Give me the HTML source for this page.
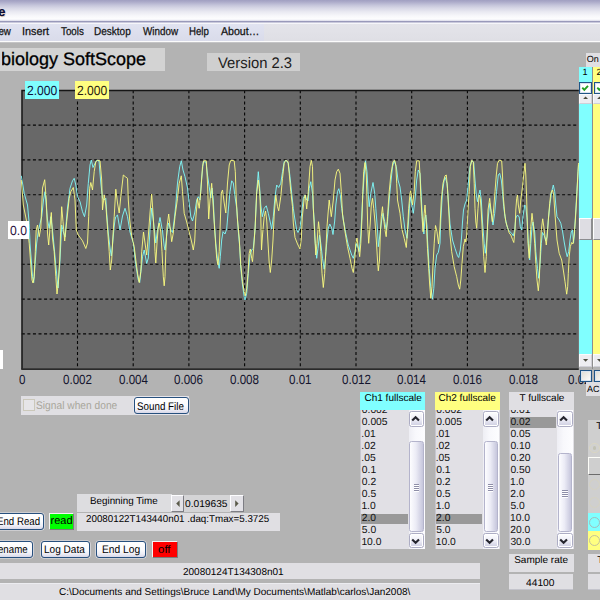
<!DOCTYPE html>
<html><head><meta charset="utf-8"><title>Neurobiology SoftScope</title>
<style>
html,body{margin:0;padding:0}
body{width:600px;height:600px;overflow:hidden;position:relative;background:#b3b3b3;font-family:"Liberation Sans",sans-serif;font-size:10px;color:#000;text-rendering:geometricPrecision}
div{position:absolute;box-sizing:border-box;white-space:nowrap}
.t{position:absolute;white-space:nowrap;transform-origin:0 0;display:block}
#tb{left:0;top:0;width:600px;height:23px;background:linear-gradient(#a09fc1 0,#adacca 9%,#c4c4da 22%,#d7d7e6 35%,#eaeaf2 52%,#f8f8fb 70%,#fdfdfe 83%,#e6e6f0 89%,#a0a0c0 92.5%,#8e8eb2 95%,#c4c4d8 97.5%,#f0f0f6 100%);overflow:hidden}
#mb{left:0;top:23px;width:600px;height:20px;background:linear-gradient(#f6f6fa 0,#f6f6fa 1px,#e4e4ea 1px,#dfdfe5 17.5px,#fbfbfb 18px,#fbfbfb 19px,#c4c4c6 19px);overflow:hidden}
#mb .t{-webkit-text-stroke:.25px #111}
#mb i{position:absolute;left:0;top:1px;width:264px;height:17px;background:linear-gradient(#e1e3f1,#d9dbea)}
.box{background:#e0dfe3}
.btn{border:1px solid #27507e;border-radius:3px;background:linear-gradient(#fff 0,#fbfbfd 50%,#eeeef6 78%,#d7d7e8 100%);box-shadow:0 0 0 .6px rgba(236,236,244,.9);overflow:hidden}
.ind{border-style:solid;border-width:1.5px 1px 1px 1.5px;border-color:#f4f4f4 #7c7c7c #7c7c7c #f4f4f4;overflow:hidden}
.lb{background:#e1e0e5;overflow:hidden;border-left:1px solid #c6c6cf}
.sel{background:#999}
.sb{top:0;width:16px;height:139px;background:linear-gradient(90deg,#eeeef4,#f8f8fc 40%,#fdfdff)}
.sbt{left:.2px;width:15.6px;height:15.6px;background:linear-gradient(#fefeff,#ececf6 55%,#cdcde0);border:1px solid #adadc4;border-radius:2.5px;box-shadow:inset 0 0 0 1px #fff}
.sbt svg{position:absolute;left:-.6px;top:.4px}
.thumb{left:.8px;width:14.4px;background:linear-gradient(90deg,#fdfdff,#ececf6 45%,#c6c6dc);border:1px solid #b4b4cc;border-radius:2.5px}
.thumb i{position:absolute;left:3.4px;top:50%;margin-top:-2.6px;width:5.5px;height:8px;background:repeating-linear-gradient(#8e8ea8 0,#8e8ea8 1px,#fff 1px,#fff 2px)}
.vs{top:67px;width:13.2px;height:287px}
.cb{width:12.2px;height:12px;border:1px solid #1f5486;background:#fff;box-shadow:inset 0 0 0 1px #d8e2ee}
.cb svg{position:absolute;left:-1px;top:-1px}
.ab{left:0;width:13.2px;background:#ededf1;border:1px solid;border-color:#fafafc #d0d0d8 #d0d0d8 #fafafc}
.ab svg{position:absolute;left:-1px;top:-1px}
.vt{left:0;width:13.2px;height:21.6px;background:#dedde3;border-style:solid;border-width:1.4px 1.1px 1.1px 1.4px;border-color:#fff #8c8c90 #8c8c90 #fff}
.rd{width:11px;height:11px;border-radius:50%;border:1px solid}
</style></head><body>
<div id="tb"><span class="t" style="left:-58.7px;top:5px;font-size:13px;line-height:13px;font-weight:bold;color:#0c0c34;text-shadow:.6px .6px 0 #c8863a55,-.5px 0 0 #2a4ab055;">SoftScope</span></div>
<div id="mb"><i></i>
<span class="t" style="left:-10.4px;top:4px;font-size:11.3px;line-height:11.3px;color:#111;transform:scaleX(0.860);">View</span>
<span class="t" style="left:21.9px;top:4px;font-size:11.3px;line-height:11.3px;color:#111;transform:scaleX(0.960);">Insert</span>
<span class="t" style="left:60.9px;top:4px;font-size:11.3px;line-height:11.3px;color:#111;transform:scaleX(0.869);">Tools</span>
<span class="t" style="left:94.4px;top:4px;font-size:11.3px;line-height:11.3px;color:#111;transform:scaleX(0.886);">Desktop</span>
<span class="t" style="left:142.8px;top:4px;font-size:11.3px;line-height:11.3px;color:#111;transform:scaleX(0.871);">Window</span>
<span class="t" style="left:189.4px;top:4px;font-size:11.3px;line-height:11.3px;color:#111;transform:scaleX(0.855);">Help</span>
<span class="t" style="left:221.0px;top:4px;font-size:11.3px;line-height:11.3px;color:#111;transform:scaleX(0.938);">About…</span>
</div>

<div style="left:0;top:47.8px;width:165px;height:23.4px;background:#d3d3d3"><div style="left:1.7px;top:0;width:163px;height:23.4px;overflow:hidden"><span class="t" style="left:-49.8px;top:2px;font-size:18px;line-height:18px;color:#000;-webkit-text-stroke:.3px #000;">Neurobiology SoftScope</span></div></div>
<div style="left:207px;top:52.8px;width:93px;height:18.2px;background:#cfcfcf"><span class="t" style="left:10.7px;top:3px;font-size:15.3px;line-height:15.3px;color:#1c1c1c;transform:scaleX(0.968);">Version 2.3</span></div>

<svg style="position:absolute;left:0;top:0" width="600" height="600" viewBox="0 0 600 600">
<rect x="21.8" y="90.3" width="557.0" height="278.4" fill="#686868"/>
<g stroke="#050505" stroke-width="1.1" stroke-dasharray="3 2.57" fill="none">
<line x1="77.5" y1="90.3" x2="77.5" y2="368.7"/>
<line x1="133.2" y1="90.3" x2="133.2" y2="368.7"/>
<line x1="188.9" y1="90.3" x2="188.9" y2="368.7"/>
<line x1="244.6" y1="90.3" x2="244.6" y2="368.7"/>
<line x1="300.3" y1="90.3" x2="300.3" y2="368.7"/>
<line x1="356.0" y1="90.3" x2="356.0" y2="368.7"/>
<line x1="411.7" y1="90.3" x2="411.7" y2="368.7"/>
<line x1="467.4" y1="90.3" x2="467.4" y2="368.7"/>
<line x1="523.1" y1="90.3" x2="523.1" y2="368.7"/>
<line x1="21.8" y1="125.1" x2="578.8" y2="125.1"/>
<line x1="21.8" y1="159.9" x2="578.8" y2="159.9"/>
<line x1="21.8" y1="194.7" x2="578.8" y2="194.7"/>
<line x1="21.8" y1="229.5" x2="578.8" y2="229.5"/>
<line x1="21.8" y1="264.3" x2="578.8" y2="264.3"/>
<line x1="21.8" y1="299.1" x2="578.8" y2="299.1"/>
<line x1="21.8" y1="333.9" x2="578.8" y2="333.9"/>
</g>
<path d="M22.0 369.3 V90.5 H578.8" fill="none" stroke="#161616" stroke-width="1.5"/>
<path d="M21.3 369.2 H578.8" fill="none" stroke="#2a2a2a" stroke-width="1.7"/>
<g fill="none" stroke-width="1" stroke-linejoin="round" stroke-opacity=".9">
<polyline stroke="#7ffcfc" points="21.3,175.8 24.2,193.3 27.5,205.0 29.2,223.3 30.0,243.0 32.5,276.7 33.7,282.5 35.0,265.0 36.7,243.0 38.3,231.0 41.7,216.7 43.5,200.0 45.0,191.7 46.2,205.0 47.5,220.0 49.2,228.3 50.8,216.7 52.0,226.0 53.3,238.0 55.8,265.0 58.0,288.0 60.0,260.0 61.7,225.0 63.3,232.0 65.0,237.0 67.5,208.0 70.0,188.3 72.5,180.8 74.2,178.3 75.8,185.0 77.5,196.7 80.0,201.7 82.5,211.7 84.5,216.7 86.7,205.0 88.3,183.3 90.0,165.0 91.3,160.0 93.0,167.5 95.0,163.3 96.7,160.3 99.0,161.0 100.8,183.0 102.5,198.0 104.2,200.0 105.8,198.3 106.7,213.0 108.3,233.0 110.0,248.0 111.3,256.0 112.5,245.0 114.0,228.0 115.0,220.0 115.8,216.7 117.5,215.0 120.0,230.0 122.5,216.0 125.0,208.3 127.5,216.7 130.0,232.0 133.3,243.0 135.8,265.0 138.3,280.0 139.7,282.5 141.3,268.0 142.5,256.7 144.2,250.0 146.7,263.5 148.3,258.0 150.0,230.0 151.7,208.0 153.5,222.0 155.8,243.0 157.5,230.0 160.0,217.5 162.5,231.0 164.2,246.0 165.0,250.0 166.7,235.0 168.5,223.0 170.8,230.0 172.5,232.5 174.2,220.0 175.8,205.0 177.5,183.0 179.7,166.7 181.3,160.8 183.0,170.0 185.0,176.7 187.5,188.0 189.2,203.0 190.8,216.7 192.5,221.0 194.7,213.0 196.7,200.0 198.3,196.7 200.0,200.0 201.7,178.0 203.3,161.7 206.0,162.0 207.5,175.0 209.2,186.7 210.8,198.0 212.0,188.0 213.3,200.0 214.2,220.0 215.8,243.3 217.5,260.0 219.2,268.3 220.3,256.7 221.7,240.0 223.0,231.7 225.0,234.0 226.7,229.0 228.3,210.0 230.0,191.7 231.7,180.8 233.3,183.0 235.0,196.7 236.7,208.0 238.3,231.0 239.7,246.7 240.8,268.3 242.5,285.0 244.2,296.7 245.0,300.0 246.7,293.3 248.3,273.3 250.0,255.0 251.7,250.0 253.3,248.3 255.0,230.0 256.7,191.7 258.3,171.7 259.7,188.3 260.8,205.0 262.3,216.7 264.2,208.3 266.3,205.8 268.3,213.3 270.0,221.0 271.7,229.0 273.3,216.7 275.0,196.7 276.7,185.0 278.7,187.5 280.8,183.3 282.5,171.7 284.2,161.7 285.8,160.0 288.3,163.3 290.0,176.7 291.7,193.3 293.3,208.3 295.0,220.0 296.7,230.0 298.0,232.5 300.0,228.3 301.7,213.3 303.3,198.3 305.0,195.0 306.7,200.0 308.0,201.0 309.2,188.3 310.8,181.7 312.5,193.3 313.3,208.3 314.2,220.0 315.3,243.3 316.7,258.3 318.0,248.3 319.5,235.0 320.8,243.3 322.5,258.3 324.2,269.2 325.3,260.0 326.7,243.3 328.3,228.0 329.8,224.0 331.7,228.0 333.0,234.5 334.7,221.0 335.8,205.0 337.5,191.7 338.8,188.7 340.3,195.0 341.7,208.3 343.3,220.0 345.8,233.3 348.3,245.0 351.7,255.0 353.3,258.3 355.0,251.7 356.7,243.5 358.3,248.3 359.2,251.7 360.8,235.0 362.5,200.0 364.2,175.0 365.5,160.8 367.0,171.7 368.0,191.7 369.2,206.7 370.8,193.3 373.0,182.5 374.7,193.3 375.8,208.3 377.5,230.0 378.3,246.7 379.5,238.0 381.7,220.0 383.0,213.3 384.7,221.7 386.2,230.0 387.5,221.7 389.2,200.0 390.8,183.3 392.5,166.7 394.2,160.8 396.3,166.7 398.0,180.0 400.0,187.0 401.7,200.0 403.3,216.7 405.0,230.0 407.0,238.3 408.3,225.0 409.7,203.3 410.8,196.7 412.0,206.7 413.3,213.3 415.0,200.0 416.7,180.0 418.3,170.0 420.0,173.3 421.3,196.7 422.5,220.0 423.9,234.0 425.0,218.0 425.8,215.0 427.0,226.0 427.5,240.0 429.2,268.3 430.8,288.3 432.5,299.2 433.8,288.3 435.0,268.3 436.7,255.0 438.3,252.5 440.0,243.3 440.8,220.0 442.5,191.7 444.2,180.0 445.3,177.5 447.0,183.3 448.3,200.0 450.0,224.0 452.5,240.0 455.0,248.3 457.5,255.8 458.7,257.5 460.3,250.0 461.5,238.0 462.5,222.0 463.5,210.0 465.0,204.0 466.7,200.0 468.3,183.3 470.0,166.7 471.7,160.8 473.7,162.5 475.0,180.0 476.3,195.0 477.5,201.7 478.7,195.0 480.0,190.0 481.3,200.0 482.5,222.0 484.2,243.3 485.3,253.3 486.7,240.0 488.0,220.0 489.7,203.3 491.3,213.3 493.0,225.0 494.7,213.3 496.5,191.7 498.3,175.0 499.7,173.3 501.3,180.0 502.5,191.7 503.7,206.7 505.0,216.7 506.7,225.0 508.3,230.0 510.0,231.7 511.7,233.3 513.3,235.8 514.7,230.0 515.8,218.0 517.5,215.0 519.2,217.0 520.3,226.7 521.7,230.0 523.0,216.7 524.7,205.0 525.8,206.7 527.0,218.0 527.5,226.7 528.7,248.3 529.7,260.0 530.8,243.3 532.0,226.7 533.0,222.0 534.7,232.0 535.8,251.7 537.5,268.3 538.7,278.3 540.0,265.0 541.3,243.3 542.5,232.5 544.2,235.5 545.8,241.0 547.0,237.0 548.3,220.0 550.0,203.3 551.7,191.7 553.3,185.0 554.7,191.7 555.8,205.0 557.0,216.7 559.2,220.0 560.8,223.3 562.5,231.0 564.2,242.0 565.8,251.0 567.2,256.7 568.7,251.7 570.0,240.0 571.3,232.0 572.5,230.0 573.5,243.0 574.5,232.0 575.5,215.0 576.7,195.0 578.0,172.0 578.5,165.0"/>
<polyline stroke="#fcfc80" points="21.3,180.0 23.3,205.0 26.7,221.7 29.2,243.3 30.8,265.0 32.0,280.0 33.0,283.0 34.2,276.7 35.3,251.7 36.2,230.0 37.5,225.0 39.2,236.7 40.8,228.0 42.5,188.0 44.7,179.7 46.3,200.0 47.5,233.0 48.7,245.0 50.0,228.0 51.3,212.5 52.5,238.0 54.2,251.7 55.8,276.7 57.0,294.0 58.3,283.0 59.7,260.0 60.5,235.0 61.7,206.7 63.0,221.7 64.7,241.0 66.7,221.7 69.2,198.3 70.8,191.7 73.3,187.5 75.0,200.0 76.3,230.0 78.3,235.0 82.5,240.8 85.8,248.5 87.5,243.0 88.7,216.7 89.7,188.3 90.8,182.5 92.5,190.0 94.2,171.7 95.8,161.7 97.5,160.3 100.0,160.8 101.7,180.0 102.5,210.0 104.2,195.0 105.8,205.0 107.5,228.0 109.2,251.7 110.3,270.0 111.7,260.0 113.0,235.0 114.2,216.7 115.8,189.2 117.5,203.0 119.2,213.0 120.8,196.7 123.3,175.0 125.3,176.7 127.5,178.3 128.3,200.0 129.7,220.0 131.7,236.0 134.2,246.7 135.8,260.0 137.5,273.0 139.2,282.5 140.8,271.7 141.7,251.7 143.5,232.0 145.0,243.0 146.7,255.0 148.3,236.0 150.0,213.0 151.7,194.0 153.0,213.0 154.2,234.0 155.0,251.7 155.8,263.0 157.0,243.0 158.3,227.0 159.2,223.0 160.8,232.0 162.0,251.7 163.3,276.7 164.2,285.8 165.0,276.7 165.8,251.7 167.0,226.7 168.7,214.0 170.0,226.7 171.7,241.7 173.3,233.0 175.0,216.7 177.5,198.3 179.2,183.3 181.3,175.8 182.5,191.7 184.2,213.3 186.7,222.0 189.2,232.0 191.7,242.0 193.3,250.0 194.7,241.0 195.8,218.0 197.5,198.3 199.2,208.3 200.8,191.7 202.5,166.7 203.7,160.8 206.3,160.8 207.5,183.0 208.7,219.0 210.0,200.0 211.7,183.3 213.3,208.0 215.0,235.0 216.7,258.3 218.0,265.0 219.2,251.7 220.3,222.0 221.3,193.0 222.5,190.0 224.2,203.0 225.8,213.0 227.5,183.0 229.2,165.0 230.8,160.3 234.2,160.8 235.3,171.7 236.3,200.0 237.5,220.0 239.2,238.0 240.8,265.0 242.5,281.7 244.2,291.7 245.3,295.8 246.7,288.3 248.0,273.3 249.2,253.3 250.3,249.0 251.7,258.3 252.5,261.7 253.7,248.3 255.2,226.0 256.7,193.0 258.3,180.0 259.7,191.7 260.8,218.0 261.5,250.0 262.5,235.0 264.2,216.7 265.5,211.0 266.7,220.0 268.0,243.0 269.2,263.0 270.3,272.5 271.7,260.0 273.0,240.0 274.2,215.0 275.8,195.0 277.5,206.7 278.7,210.8 280.8,196.7 282.5,178.3 284.2,163.3 285.8,160.3 288.0,161.7 289.2,173.3 290.8,191.7 292.5,206.7 293.3,223.0 295.0,237.5 297.5,244.0 300.0,249.0 301.3,239.0 302.3,217.0 304.2,198.3 305.3,195.0 306.7,209.0 308.3,191.7 310.0,166.7 311.3,160.3 312.5,166.7 313.3,208.0 314.7,235.0 315.8,255.0 317.0,243.3 318.5,221.7 319.7,232.0 320.8,251.7 322.0,273.3 323.3,287.5 324.7,273.3 325.8,251.7 327.0,226.7 328.0,214.0 329.2,200.0 330.0,206.7 331.3,216.7 333.3,200.0 335.0,180.0 336.7,171.7 338.3,169.2 340.0,173.3 341.3,191.7 342.5,214.0 345.0,231.7 347.5,246.7 350.0,258.3 352.0,268.3 353.3,272.5 354.7,260.0 355.8,243.3 357.0,238.0 358.3,248.0 359.7,256.7 360.8,243.3 362.0,218.0 362.8,191.7 363.7,171.7 365.0,162.5 366.3,175.0 367.0,200.0 367.7,225.0 368.7,243.3 370.2,224.0 371.3,205.0 372.5,198.3 373.7,208.3 375.0,222.0 376.3,240.0 377.5,260.0 378.3,270.8 379.5,260.0 380.3,235.0 381.3,216.7 382.5,206.7 383.3,216.7 385.0,230.0 386.2,236.7 387.5,216.7 389.2,191.7 390.8,175.0 393.0,161.7 394.7,160.3 395.8,165.0 396.7,183.3 397.5,200.0 400.0,213.3 401.7,228.3 404.2,238.3 406.3,247.5 407.5,230.0 408.7,208.3 410.0,193.3 410.8,190.8 412.5,205.0 414.2,191.7 415.3,171.7 416.7,160.8 419.2,160.8 420.0,175.0 420.8,196.7 422.0,216.7 423.0,231.7 424.2,213.3 425.0,205.0 426.3,223.0 427.5,248.3 428.7,268.3 429.7,285.0 430.8,298.3 432.0,286.7 433.0,265.0 434.2,243.3 435.5,225.5 437.0,231.7 438.5,244.0 440.0,227.0 441.3,200.0 443.0,183.3 445.0,175.8 446.3,175.0 447.5,188.3 448.7,210.0 450.0,235.0 451.7,251.7 454.2,266.7 456.7,276.7 458.3,285.0 459.7,289.2 460.8,280.0 462.0,263.3 463.3,246.7 465.0,239.0 465.8,242.0 466.7,235.0 467.5,220.0 468.3,205.0 469.2,191.7 470.3,166.7 471.7,160.3 473.3,161.7 474.2,183.3 475.0,208.3 475.8,222.0 476.7,228.3 478.0,208.3 479.2,195.0 480.3,198.3 481.3,212.0 482.5,235.0 483.7,256.7 485.0,272.5 486.3,256.7 487.2,235.0 488.0,210.0 489.7,198.3 490.8,208.3 492.3,221.7 493.3,213.3 495.0,191.7 496.3,175.0 497.5,163.3 499.2,160.3 501.7,160.8 502.5,175.0 503.3,196.7 504.7,213.3 505.8,221.7 507.5,227.5 509.2,233.0 510.8,235.0 512.5,239.5 513.8,242.5 515.0,230.0 515.8,210.0 516.7,198.3 517.5,195.0 518.3,205.0 519.7,213.3 520.8,200.0 522.5,186.7 523.7,175.0 525.0,163.3 525.8,175.0 526.7,200.0 527.3,222.0 528.0,243.3 529.2,258.3 530.0,243.3 530.8,226.7 532.0,213.3 533.3,225.0 534.7,243.3 535.8,263.3 537.0,280.0 538.3,290.8 539.3,280.0 540.3,251.7 541.3,230.0 542.7,218.8 543.7,226.0 545.0,236.7 546.3,245.0 547.5,232.0 548.5,218.0 549.7,203.3 550.8,193.3 552.5,190.0 553.7,195.0 554.7,210.0 555.8,225.0 557.0,240.0 559.2,253.3 561.7,260.0 563.3,270.0 565.0,281.7 566.7,294.2 567.7,286.7 568.3,273.3 569.2,256.7 570.3,246.7 571.7,242.5 573.0,244.0 574.2,235.0 575.3,221.0 576.3,205.0 577.0,191.7 578.0,171.7 578.5,163.0"/>
</g>
</svg>

<div style="left:25px;top:80.8px;width:33.8px;height:18.4px;background:#80ffff"><span class="t" style="left:1.5px;top:3px;font-size:13.33px;line-height:13.33px;color:#10103a;transform:scaleX(0.907);">2.000</span></div>
<div style="left:75.4px;top:80.8px;width:33.8px;height:18.4px;background:#ffff80"><span class="t" style="left:1.5px;top:3px;font-size:13.33px;line-height:13.33px;color:#2a1a10;transform:scaleX(0.907);">2.000</span></div>
<div style="left:8px;top:221px;width:21.4px;height:18.3px;background:#fff"><span class="t" style="left:2.0px;top:3px;font-size:13.33px;line-height:13.33px;color:#2a1040;transform:scaleX(0.913);">0.0</span></div>
<div style="left:0;top:350px;width:3px;height:18.5px;background:#fff"></div>
<span class="t" style="left:18.6px;top:373px;font-size:13.33px;line-height:13.33px;color:#14142e;transform:scaleX(0.870);">0</span><span class="t" style="left:63.1px;top:373px;font-size:13.33px;line-height:13.33px;color:#14142e;transform:scaleX(0.870);">0.002</span><span class="t" style="left:118.6px;top:373px;font-size:13.33px;line-height:13.33px;color:#14142e;transform:scaleX(0.870);">0.004</span><span class="t" style="left:174.4px;top:373px;font-size:13.33px;line-height:13.33px;color:#14142e;transform:scaleX(0.870);">0.006</span><span class="t" style="left:230.1px;top:373px;font-size:13.33px;line-height:13.33px;color:#14142e;transform:scaleX(0.870);">0.008</span><span class="t" style="left:289.1px;top:373px;font-size:13.33px;line-height:13.33px;color:#14142e;transform:scaleX(0.870);">0.01</span><span class="t" style="left:341.6px;top:373px;font-size:13.33px;line-height:13.33px;color:#14142e;transform:scaleX(0.870);">0.012</span><span class="t" style="left:397.1px;top:373px;font-size:13.33px;line-height:13.33px;color:#14142e;transform:scaleX(0.870);">0.014</span><span class="t" style="left:452.9px;top:373px;font-size:13.33px;line-height:13.33px;color:#14142e;transform:scaleX(0.870);">0.016</span><span class="t" style="left:508.6px;top:373px;font-size:13.33px;line-height:13.33px;color:#14142e;transform:scaleX(0.870);">0.018</span><span class="t" style="left:567.6px;top:373px;font-size:13.33px;line-height:13.33px;color:#14142e;transform:scaleX(0.870);">0.02</span>

<!-- right sliders -->
<div class="box" style="left:586px;top:53px;width:20px;height:13.6px"><span class="t" style="left:0.8px;top:2px;font-size:9px;line-height:9px;color:#000;">On</span></div>
<div style="left:592px;top:67px;width:1.4px;height:302px;background:#8e8e8e"></div>
<div class="vs" style="left:578.9px;background:#80ffff">
<span class="t" style="left:3.6px;top:1px;font-size:9px;line-height:9px;color:#000;">1</span>
<div class="cb" style="left:.6px;top:14.9px"><svg width="12" height="12" viewBox="0 0 12 12"><path d="M3.3 5.7 L5.3 7.9 L9 3.9" fill="none" stroke="#21a121" stroke-width="1.9"/></svg></div>
<div class="ab" style="top:27.0px;height:10.3px"><svg width="13" height="10" viewBox="0 0 13 10"><path d="M4.2 5 L6.6 2.6 L9 5 Z" fill="#4d4d40"/></svg></div>
<div class="vt" style="top:151px"></div>
<div class="ab" style="top:287px;height:13.2px"><svg width="13" height="13" viewBox="0 0 13 13"><path d="M4 5 L6.6 7.8 L9.2 5 Z" fill="#4d4d40"/></svg></div>
</div>
<div class="cb" style="left:579.5px;top:369.6px;background:linear-gradient(135deg,#dcdad2,#fff)"></div>
<div class="vs" style="left:593.3px;background:#ffff80">
<span class="t" style="left:3.3px;top:1px;font-size:9px;line-height:9px;color:#000;">2</span>
<div class="cb" style="left:.6px;top:14.9px"><svg width="12" height="12" viewBox="0 0 12 12"><path d="M3.3 5.7 L5.3 7.9 L9 3.9" fill="none" stroke="#21a121" stroke-width="1.9"/></svg></div>
<div class="ab" style="top:27.0px;height:10.3px"><svg width="13" height="10" viewBox="0 0 13 10"><path d="M4.2 5 L6.6 2.6 L9 5 Z" fill="#4d4d40"/></svg></div>
<div class="vt" style="top:151px"></div>
<div class="ab" style="top:287px;height:13.2px"><svg width="13" height="13" viewBox="0 0 13 13"><path d="M4 5 L6.6 7.8 L9.2 5 Z" fill="#4d4d40"/></svg></div>
</div>
<div class="cb" style="left:593.9px;top:369.6px;background:linear-gradient(135deg,#dcdad2,#fff)"></div>
<div class="box" style="left:586px;top:382px;width:20px;height:14px"><span class="t" style="left:1.0px;top:3px;font-size:9px;line-height:9px;color:#000;">AC</span></div>

<!-- signal when done -->
<div class="box" style="left:21px;top:396.4px;width:168px;height:18.4px"></div>
<div style="left:22.6px;top:399.4px;width:12px;height:12px;border:1px solid #cbc8ba;background:#e6e5e8"></div>
<span class="t" style="left:36.1px;top:401px;font-size:11px;line-height:11px;color:#a8a69b;transform:scaleX(0.929);">Signal when done</span>
<div class="btn" style="left:134.2px;top:396.8px;width:54.4px;height:17px"><span class="t" style="left:1.4px;top:4px;font-size:11px;line-height:11px;color:#000;transform:scaleX(0.891);">Sound File</span></div>

<!-- bottom-left -->
<div class="box" style="left:76.6px;top:493.6px;width:95px;height:18.6px;background:#dddde0"><span class="t" style="left:13.5px;top:3px;font-size:10px;line-height:10px;color:#000;transform:scaleX(0.981);">Beginning Time</span></div>
<div class="box" style="left:184px;top:494.6px;width:46.4px;height:17px;background:#d4d4d6"><span class="t" style="left:0.9px;top:5px;font-size:10px;line-height:10px;color:#000;transform:scaleX(1.020);">0.019635</span></div>
<div class="ab" style="left:170.6px;top:494.6px;width:13.6px;height:17px;background:#e2e1e6;border-color:#fdfdff #7d7d84 #7d7d84 #fdfdff"><svg width="13" height="17" viewBox="0 0 13 17"><path d="M8.6 5.2 L5.2 8.6 L8.6 12 Z" fill="#5a5a4a"/></svg></div>
<div class="ab" style="left:230.2px;top:494.6px;width:13.4px;height:17px;background:#e2e1e6;border-color:#fdfdff #7d7d84 #7d7d84 #fdfdff"><svg width="13" height="17" viewBox="0 0 13 17"><path d="M5.2 5.2 L8.6 8.6 L5.2 12 Z" fill="#5a5a4a"/></svg></div>
<div class="box" style="left:76.6px;top:512.6px;width:203px;height:18.2px"><span class="t" style="left:9.4px;top:2px;font-size:10px;line-height:10px;color:#000;transform:scaleX(0.979);">20080122T143440n01 .daq:Tmax=5.3725</span></div>
<div class="btn" style="left:-20px;top:513.3px;width:63.6px;height:17px"><span class="t" style="left:15.9px;top:3px;font-size:11px;line-height:11px;color:#000;transform:scaleX(0.880);">End Read</span></div>
<div class="ind" style="left:49px;top:513px;width:25.4px;height:17.2px;background:#00ff00"><span class="t" style="left:0.5px;top:2px;font-size:11px;line-height:11px;color:#000;">read</span></div>
<div class="btn" style="left:-20px;top:541px;width:53.4px;height:17px"><span class="t" style="left:10.1px;top:3px;font-size:11px;line-height:11px;color:#000;transform:scaleX(0.880);">Rename</span></div>
<div class="btn" style="left:40.8px;top:541px;width:49.6px;height:17px"><span class="t" style="left:2.4px;top:3px;font-size:11px;line-height:11px;color:#000;transform:scaleX(0.914);">Log Data</span></div>
<div class="btn" style="left:96.3px;top:541px;width:49.6px;height:17px"><span class="t" style="left:4.4px;top:3px;font-size:11px;line-height:11px;color:#000;transform:scaleX(0.931);">End Log</span></div>
<div class="ind" style="left:152px;top:540.6px;width:25.6px;height:17.6px;background:#ff0000"><span class="t" style="left:4.7px;top:3px;font-size:11px;line-height:11px;color:#000;transform:scaleX(1.043);">off</span></div>

<div class="box" style="left:-10px;top:563.4px;width:490px;height:15.6px"><span class="t" style="left:193.0px;top:5px;font-size:10px;line-height:10px;color:#000;">20080124T134308n01</span></div>
<div class="box" style="left:-10px;top:582.8px;width:490px;height:18px;border-top:1px solid #ececf0"><span class="t" style="left:69.0px;top:4px;font-size:10px;line-height:10px;color:#000;">C:\Documents and Settings\Bruce Land\My Documents\Matlab\carlos\Jan2008\</span></div>

<!-- list boxes -->
<div class="box" style="left:360px;top:392.3px;width:65.4px;height:18px;background:#80ffff"><span class="t" style="left:4.5px;top:2px;font-size:10px;line-height:10px;color:#000;">Ch1 fullscale</span></div>
<div class="box" style="left:434.6px;top:392.3px;width:65.1px;height:18px;background:#ffff80"><span class="t" style="left:3.9px;top:2px;font-size:10px;line-height:10px;color:#000;">Ch2 fullscale</span></div>
<div class="box" style="left:508.8px;top:392.3px;width:65px;height:18px"><span class="t" style="left:10.8px;top:2px;font-size:10px;line-height:10px;color:#000;">T fullscale</span></div>
<div class="lb" style="left:360px;top:410.3px;width:65.4px;height:138.5px">
<span class="t" style="left:0.8px;top:-4px;font-size:10.3px;line-height:10.3px;color:#111;">0.002</span><span class="t" style="left:0.8px;top:8px;font-size:10.3px;line-height:10.3px;color:#111;">0.005</span><span class="t" style="left:0.3px;top:20px;font-size:10.3px;line-height:10.3px;color:#111;">.01</span><span class="t" style="left:0.3px;top:32px;font-size:10.3px;line-height:10.3px;color:#111;">.02</span><span class="t" style="left:0.3px;top:44px;font-size:10.3px;line-height:10.3px;color:#111;">.05</span><span class="t" style="left:0.8px;top:56px;font-size:10.3px;line-height:10.3px;color:#111;">0.1</span><span class="t" style="left:0.8px;top:68px;font-size:10.3px;line-height:10.3px;color:#111;">0.2</span><span class="t" style="left:0.8px;top:80px;font-size:10.3px;line-height:10.3px;color:#111;">0.5</span><span class="t" style="left:0.4px;top:92px;font-size:10.3px;line-height:10.3px;color:#111;">1.0</span><div class="sel" style="left:.3px;top:103.3px;width:46.8px;height:10.8px"></div><span class="t" style="left:0.7px;top:104px;font-size:10.3px;line-height:10.3px;color:#111;">2.0</span><span class="t" style="left:0.8px;top:116px;font-size:10.3px;line-height:10.3px;color:#111;">5.0</span><span class="t" style="left:0.4px;top:128px;font-size:10.3px;line-height:10.3px;color:#111;">10.0</span>
<div class="sb" style="left:47.5px"><div class="sbt" style="top:.8px"><svg width="14" height="14" viewBox="0 0 14 14"><path d="M3.2 8.6 L6.6 5.2 L10 8.6" fill="none" stroke="#26262e" stroke-width="2.1"/></svg></div>
<div class="thumb" style="top:30.9px;height:90.6px"><i></i></div>
<div class="sbt" style="top:122.3px"><svg width="14" height="14" viewBox="0 0 14 14"><path d="M3.2 5.4 L6.6 8.8 L10 5.4" fill="none" stroke="#26262e" stroke-width="2.1"/></svg></div></div>
</div>
<div class="lb" style="left:434.6px;top:410.3px;width:65.1px;height:138.5px">
<span class="t" style="left:0.6px;top:-4px;font-size:10.3px;line-height:10.3px;color:#111;">0.002</span><span class="t" style="left:0.6px;top:8px;font-size:10.3px;line-height:10.3px;color:#111;">0.005</span><span class="t" style="left:0.1px;top:20px;font-size:10.3px;line-height:10.3px;color:#111;">.01</span><span class="t" style="left:0.1px;top:32px;font-size:10.3px;line-height:10.3px;color:#111;">.02</span><span class="t" style="left:0.1px;top:44px;font-size:10.3px;line-height:10.3px;color:#111;">.05</span><span class="t" style="left:0.6px;top:56px;font-size:10.3px;line-height:10.3px;color:#111;">0.1</span><span class="t" style="left:0.6px;top:68px;font-size:10.3px;line-height:10.3px;color:#111;">0.2</span><span class="t" style="left:0.6px;top:80px;font-size:10.3px;line-height:10.3px;color:#111;">0.5</span><span class="t" style="left:0.2px;top:92px;font-size:10.3px;line-height:10.3px;color:#111;">1.0</span><div class="sel" style="left:.3px;top:103.3px;width:46.5px;height:10.8px"></div><span class="t" style="left:0.5px;top:104px;font-size:10.3px;line-height:10.3px;color:#111;">2.0</span><span class="t" style="left:0.6px;top:116px;font-size:10.3px;line-height:10.3px;color:#111;">5.0</span><span class="t" style="left:0.2px;top:128px;font-size:10.3px;line-height:10.3px;color:#111;">10.0</span>
<div class="sb" style="left:47.2px"><div class="sbt" style="top:.8px"><svg width="14" height="14" viewBox="0 0 14 14"><path d="M3.2 8.6 L6.6 5.2 L10 8.6" fill="none" stroke="#26262e" stroke-width="2.1"/></svg></div>
<div class="thumb" style="top:30.9px;height:90.6px"><i></i></div>
<div class="sbt" style="top:122.3px"><svg width="14" height="14" viewBox="0 0 14 14"><path d="M3.2 5.4 L6.6 8.8 L10 5.4" fill="none" stroke="#26262e" stroke-width="2.1"/></svg></div></div>
</div>
<div class="lb" style="left:508.8px;top:410.3px;width:65px;height:138.5px">
<span class="t" style="left:0.6px;top:-4px;font-size:10.3px;line-height:10.3px;color:#111;">0.01</span><div class="sel" style="left:.3px;top:7.0px;width:46.4px;height:10.8px"></div><span class="t" style="left:0.6px;top:8px;font-size:10.3px;line-height:10.3px;color:#111;">0.02</span><span class="t" style="left:0.6px;top:20px;font-size:10.3px;line-height:10.3px;color:#111;">0.05</span><span class="t" style="left:0.6px;top:32px;font-size:10.3px;line-height:10.3px;color:#111;">0.10</span><span class="t" style="left:0.6px;top:44px;font-size:10.3px;line-height:10.3px;color:#111;">0.20</span><span class="t" style="left:0.6px;top:56px;font-size:10.3px;line-height:10.3px;color:#111;">0.50</span><span class="t" style="left:0.2px;top:68px;font-size:10.3px;line-height:10.3px;color:#111;">1.0</span><span class="t" style="left:0.5px;top:80px;font-size:10.3px;line-height:10.3px;color:#111;">2.0</span><span class="t" style="left:0.6px;top:92px;font-size:10.3px;line-height:10.3px;color:#111;">5.0</span><span class="t" style="left:0.2px;top:104px;font-size:10.3px;line-height:10.3px;color:#111;">10.0</span><span class="t" style="left:0.5px;top:116px;font-size:10.3px;line-height:10.3px;color:#111;">20.0</span><span class="t" style="left:0.6px;top:128px;font-size:10.3px;line-height:10.3px;color:#111;">30.0</span>
<div class="sb" style="left:47.1px"><div class="sbt" style="top:.8px"><svg width="14" height="14" viewBox="0 0 14 14"><path d="M3.2 8.6 L6.6 5.2 L10 8.6" fill="none" stroke="#26262e" stroke-width="2.1"/></svg></div>
<div class="thumb" style="top:42.9px;height:78.6px"><i></i></div>
<div class="sbt" style="top:122.3px"><svg width="14" height="14" viewBox="0 0 14 14"><path d="M3.2 5.4 L6.6 8.8 L10 5.4" fill="none" stroke="#26262e" stroke-width="2.1"/></svg></div></div>
</div>
<div class="box" style="left:509.2px;top:554.2px;width:64.5px;height:18.3px"><span class="t" style="left:5.0px;top:2px;font-size:10px;line-height:10px;color:#000;">Sample rate</span></div>
<div class="box" style="left:509.4px;top:574.2px;width:63.8px;height:16.2px;border-bottom:1px solid #c4c4cc"><span class="t" style="left:16.7px;top:5px;font-size:10px;line-height:10px;color:#000;transform:scaleX(1.024);">44100</span></div>

<!-- right panel -->
<div style="left:588px;top:420px;width:20px;height:92.5px;background:#cfcfcf"><span class="t" style="left:8.2px;top:2px;font-size:10px;line-height:10px;color:#000;">Time</span></div>
<div style="left:589.4px;top:442.6px;width:10.4px;height:10.4px;border-radius:50%;border:1px solid #d9d5c3;background:#d1d1cf"></div>
<div style="left:592.7px;top:445.9px;width:3.8px;height:3.8px;border-radius:50%;background:#c2c2b4"></div>
<div style="left:588px;top:457px;width:20px;height:17.6px;background:#cfcfcf;border-style:solid;border-width:1.5px;border-color:#fdfdf8 #777 #6c6c6c #fdfdf8"></div>
<div class="rd" style="left:589.0px;top:478.9px;border-color:#d5d2c2"></div>
<div class="rd" style="left:589.0px;top:496.9px;border-color:#d5d2c2"></div>
<div style="left:588px;top:512.5px;width:20px;height:18.5px;background:#80ffff"></div>
<div style="left:588px;top:531px;width:20px;height:19px;background:#ffff80"></div>
<div class="rd" style="left:589.1px;top:516.8px;border-color:#a4bcbc"></div>
<div class="rd" style="left:589.1px;top:535.0px;border-color:#c4c49c"></div>
<div class="box" style="left:588px;top:554.2px;width:20px;height:18.3px"><span class="t" style="left:9.2px;top:2px;font-size:10px;line-height:10px;color:#000;">T</span></div>
<div class="box" style="left:588px;top:574.2px;width:20px;height:16.2px;border-bottom:1px solid #c4c4cc"></div>
</body></html>
